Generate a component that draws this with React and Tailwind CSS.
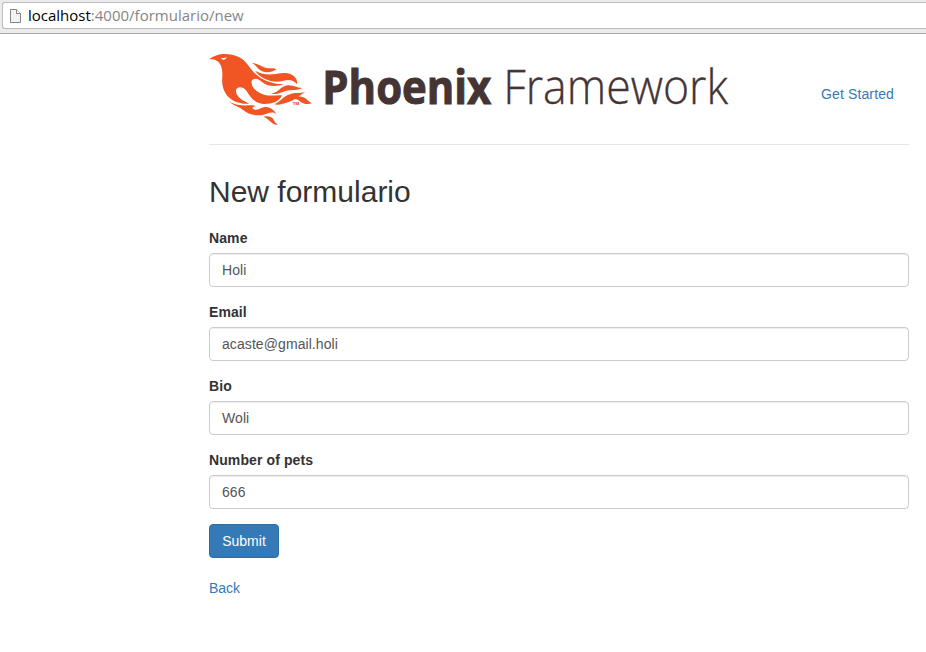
const fields = [
  ["Name", "Holi"],
  ["Email", "acaste@gmail.holi"],
  ["Bio", "Woli"],
  ["Number of pets", "666"],
];

function AddressBar() {
  return (
    <div className="h-[34px] border-b border-[#a9a9a9] bg-[#ebebeb] pt-0.5 pl-0.5">
      <div className="flex h-[27px] items-center rounded-l-[3px] border border-r-0 border-[#bcbcbc] bg-white pl-[6px]">
        <svg width="13" height="16" viewBox="0 0 13 16" className="shrink-0">
          <path d="M1.5 1.5H7.5L11.5 5.5V14.5H1.5Z" fill="#f3f3f3" stroke="#858585" />
          <path d="M7.5 1.5V5.5H11.5" fill="#fff" stroke="#858585" />
        </svg>
        <span className="mb-0.5 ml-[6px] font-['Open_Sans',sans-serif] text-[15px] leading-5 whitespace-nowrap text-[#858585]">
          <span className="text-black">localhost</span>:4000/formulario/new
        </span>
      </div>
    </div>
  );
}

function Logo() {
  return (
    <svg width="524" height="76" viewBox="27 15 1572 228" role="img" aria-label="Phoenix Framework" className="overflow-visible">
      <g fill="#f15524">
        <path d="M27 43C40 33 55 27 77 27C103 27 126 38 139 54C152 69 160 84 174 93C195 109 222 117 251 118C225 127 199 123 185 110C174 99 157 98 155 109C152 126 170 144 195 150C213 154 229 149 246 151C237 171 215 178 190 177C168 175 153 160 143 143C133 123 110 122 108 135C105 153 128 168 148 176C119 179 91 167 78 147C65 127 66 109 67 91C68 71 62 51 46 45C40 43 34 43 27 43Z" />
        <path d="M156 54C174 55 184 65 199 69C211 72 219 67 229 73C216 82 201 84 186 79C173 73 169 61 156 54Z" />
        <path d="M165 77C184 88 202 89 218 88C235 86 247 82 263 85C281 89 293 101 292 118C281 105 265 102 250 107C222 116 184 104 165 77Z" />
        <path d="M213 146C238 142 240 125 262 121C278 119 289 128 307 129C294 137 275 134 260 137C244 141 235 149 213 146Z" />
        <path d="M222 178C244 169 249 152 274 146C289 142 302 146 316 141C299 150 287 165 266 171C250 176 238 181 222 178Z" />
        <path d="M264 163C280 153 305 152 316 160C324 167 328 172 336 175C321 180 308 176 298 167C288 160 275 163 264 163Z" />
        <path d="M88 170C106 180 126 182 145 181C156 180 163 180 168 184C156 184 154 192 164 194C179 197 186 183 204 187C216 190 222 198 229 206C214 197 202 207 188 210C165 214 142 206 129 195C117 184 101 182 88 170Z" />
        <path d="M191 215C211 211 219 219 223 228C226 235 230 236 234 240C216 240 210 224 191 215Z" />
      </g>
      <path d="M63 39Q73 40 80 37Q78 46 69 44Q65 43 63 39Z" fill="#fff" />
      <text x="278" y="179" fontSize="12" fontWeight="800" fill="#f15524" textLength="20" lengthAdjust="spacingAndGlyphs" className="font-['Open_Sans',sans-serif]">TM</text>
      <text x="367" y="177" fontSize="142" fontWeight="700" fill="#453434" stroke="#453434" strokeWidth="3" textLength="507" lengthAdjust="spacingAndGlyphs" className="font-['Open_Sans',sans-serif]">Phoenix</text>
      <text x="910" y="177" fontSize="142" fontWeight="300" fill="#453434" stroke="#453434" strokeWidth="1" textLength="674" lengthAdjust="spacingAndGlyphs" className="font-['Open_Sans',sans-serif]">Framework</text>
    </svg>
  );
}

export default function App() {
  return (
    <div className="min-h-[652px] bg-white font-['Liberation_Sans',Arial,sans-serif] text-sm leading-5 text-[#333]">
      <AddressBar />
      <main className="ml-[209px] w-[700px]">
        <header className="flex h-[111px] items-start justify-between border-b border-[#e5e5e5] pt-4 pr-[15px]">
          <Logo />
          <a href="#start" className="mt-[34px] tracking-[0.13px] text-[#337ab7]">Get Started</a>
        </header>
        <h2 className="mt-[30px] text-[30px] leading-[33px] font-normal">New formulario</h2>
        <form className="mt-5">
          {fields.map(([label, value]) => (
            <div key={label} className="mb-[15px]">
              <label className="mb-[5px] block font-bold tracking-[0.1px]">
                {label}
              </label>
              <input
                defaultValue={value}
                aria-label={label}
                className="block h-[34px] w-full rounded-[4px] border border-[#ccc] bg-white px-3 py-1.5 tracking-[0.08px] text-[#555] shadow-[inset_0_1px_1px_rgba(0,0,0,0.075)] outline-none"
              />
            </div>
          ))}
          <button type="button" className="block h-[34px] w-[70px] rounded-[4px] border border-[#2e6da4] bg-[#337ab7] text-white">
            Submit
          </button>
        </form>
        <a href="#back" className="mt-5 block w-fit text-[#337ab7]">Back</a>
      </main>
    </div>
  );
}
